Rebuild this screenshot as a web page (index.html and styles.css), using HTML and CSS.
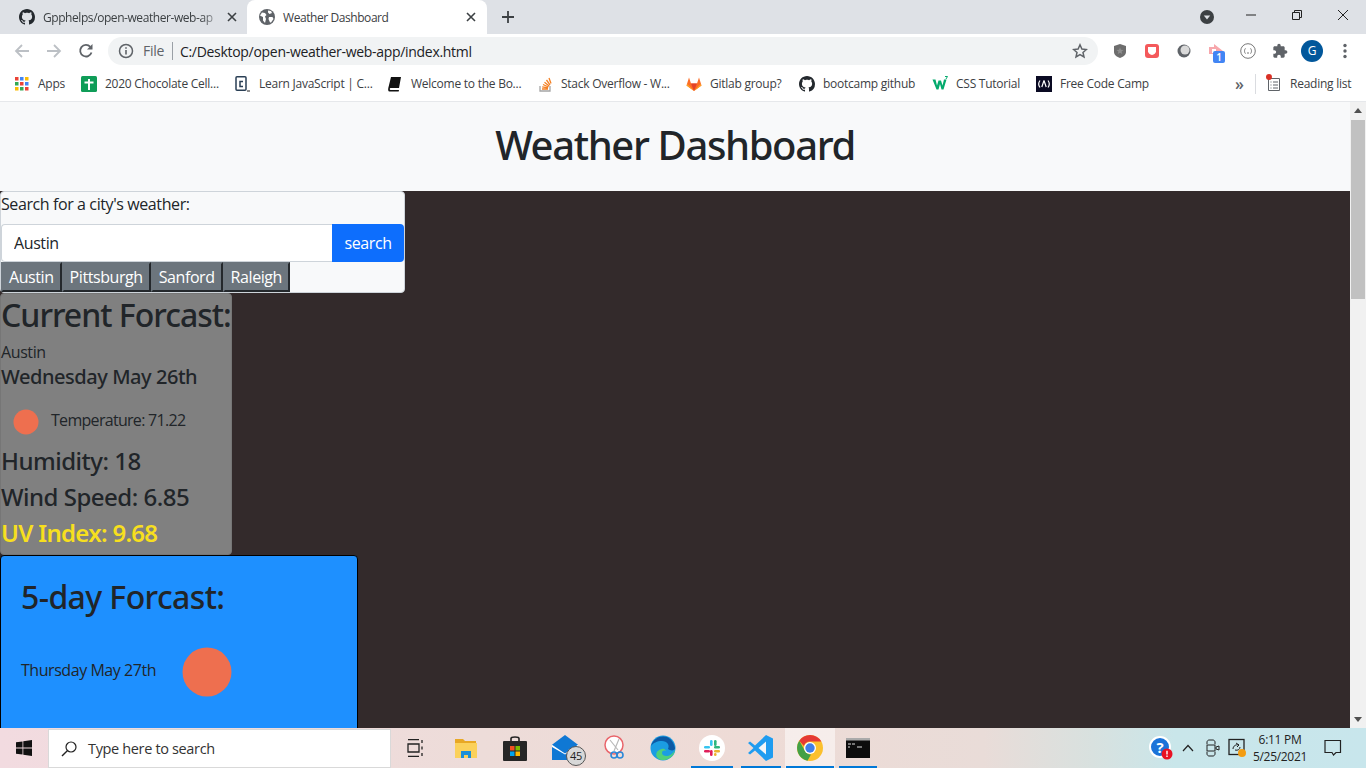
FILE: index.html
```html
<!DOCTYPE html>
<html>
<head>
  <meta charset="utf-8" />
  <title>Weather Dashboard</title>
  <link rel="stylesheet" href="styles.css">
</head>
<body>

<svg class="defs" width="0" height="0">
  <symbol id="gh" viewBox="0 0 16 16"><path d="M8 0C3.58 0 0 3.58 0 8c0 3.54 2.29 6.53 5.47 7.59.4.07.55-.17.55-.38 0-.19-.01-.82-.01-1.49-2.01.37-2.53-.49-2.69-.94-.09-.23-.48-.94-.82-1.13-.28-.15-.68-.52-.01-.53.63-.01 1.08.58 1.23.82.72 1.21 1.87.87 2.33.66.07-.52.28-.87.51-1.07-1.78-.2-3.64-.89-3.64-3.95 0-.87.31-1.59.82-2.15-.08-.2-.36-1.02.08-2.12 0 0 .67-.21 2.2.82.64-.18 1.32-.27 2-.27.68 0 1.36.09 2 .27 1.53-1.04 2.2-.82 2.2-.82.44 1.1.16 1.92.08 2.12.51.56.82 1.27.82 2.15 0 3.07-1.87 3.75-3.65 3.95.29.25.54.73.54 1.48 0 1.07-.01 1.93-.01 2.2 0 .21.15.46.55.38A8.013 8.013 0 0016 8c0-4.42-3.58-8-8-8z"/></symbol>
  <symbol id="x" viewBox="0 0 10 10"><path d="M1 1l8 8M9 1l-8 8" fill="none" stroke="currentColor" stroke-width="1.6"/></symbol>
</svg>

<!-- browser chrome -->
<div class="tabstrip">
  <div class="tab">
    <svg class="favicon" fill="#24292e"><use href="#gh"/></svg>
    <span class="tab-title fade">Gpphelps/open-weather-web-ap</span>
    <svg class="tab-close"><use href="#x"/></svg>
  </div>
  <div class="tab active">
    <svg class="favicon" viewBox="0 0 16 16"><circle cx="8" cy="8" r="8" fill="#5f6368"/><path d="M3 3.5l3 .5 1.500 2-1.500 1.500 1 2.500-1 4-2-2.500V8L1 6.500zM9 1.500l3 .5 1 2-2.500 1L9 3.500zM10 8h3.500l1 2-2.500 3.500h-1L9.500 10z" fill="#fff"/></svg>
    <span class="tab-title">Weather Dashboard</span>
    <svg class="tab-close"><use href="#x"/></svg>
  </div>
  <svg class="new-tab" viewBox="0 0 12 12"><path d="M6 0v12M0 6h12" stroke="#3c4043" stroke-width="1.800" fill="none"/></svg>
  <div class="window-btns">
    <svg class="profile-dot" viewBox="0 0 14 14"><circle cx="7" cy="7" r="7" fill="#3c4043"/><path d="M3.800 5.500h6.400L7 9.500z" fill="#dee1e6"/></svg>
    <svg class="win-btn" viewBox="0 0 46 30"><path d="M18 15h10" stroke="#222" fill="none"/></svg>
    <svg class="win-btn" viewBox="0 0 46 30"><path d="M18.500 12.500h7v7h-7zM20.500 12.500v-2h7v7h-2" stroke="#222" fill="none"/></svg>
    <svg class="win-btn" viewBox="0 0 46 30"><path d="M18 10l10 10M28 10L18 20" stroke="#222" fill="none"/></svg>
  </div>
</div>

<div class="toolbar">
  <svg class="nav-icon" viewBox="0 0 16 16"><path d="M15 8H2M8 2L2 8l6 6" fill="none" stroke="#bcc0c5" stroke-width="1.800"/></svg>
  <svg class="nav-icon" viewBox="0 0 16 16"><path d="M1 8h13M8 2l6 6-6 6" fill="none" stroke="#bcc0c5" stroke-width="1.800"/></svg>
  <svg class="nav-icon" viewBox="0 0 16 16"><path d="M13.500 9.500A5.800 5.800 0 1 1 12.300 3.800" fill="none" stroke="#5f6368" stroke-width="1.800"/><path d="M14.500 1v5.500H9z" fill="#5f6368"/></svg>
  <div class="omnibox">
    <svg class="info" viewBox="0 0 16 16"><circle cx="8" cy="8" r="6.500" fill="none" stroke="#5f6368" stroke-width="1.500"/><path d="M8 7v4.500M8 4.300v1.500" stroke="#5f6368" stroke-width="1.600"/></svg>
    <span class="scheme">File</span>
    <span class="url">C:/Desktop/open-weather-web-app/index.html</span>
    <svg class="star" viewBox="0 0 16 16"><path d="M8 1.800l1.900 4.200 4.500.5-3.400 3 1 4.500L8 11.700 4 14l1-4.500-3.400-3 4.500-.5z" fill="none" stroke="#5f6368" stroke-width="1.500"/></svg>
  </div>
  <div class="ext-icons">
    <svg class="ext" viewBox="0 0 16 16"><path d="M8 1l6 2v6c0 3-3 5-6 6-3-1-6-3-6-6V3z" fill="#6d6d6d"/><path d="M8 4.500l1 2.300 2.500.2-1.900 1.600.6 2.400L8 9.800l-2.200 1.200.6-2.400L4.500 7 7 6.800z" fill="#8e8e8e"/></svg>
    <svg class="ext" viewBox="0 0 16 16"><rect x="1" y="1" width="14" height="14" rx="3" fill="#f4595b"/><path d="M4 4h8v4.500c0 1.500-2 3-4 3.500-2-.5-4-2-4-3.500z" fill="#fff"/></svg>
    <svg class="ext" viewBox="0 0 16 16"><circle cx="8" cy="8" r="6.500" fill="#5f6368"/><circle cx="9" cy="7" r="4.500" fill="#d9d9d9"/></svg>
    <div class="ext ext-badged">
      <svg viewBox="0 0 16 16"><path d="M1 4h5V1l9 7-5 4-4-1H1z" fill="#f7a7ac"/><path d="M4 6h4v4H4z" fill="#fff"/></svg>
      <span class="ext-badge">1</span>
    </div>
    <svg class="ext" viewBox="0 0 16 16"><circle cx="8" cy="8" r="7.300" fill="none" stroke="#777"/><path d="M5.500 5.500c-1 0-.5 2-1.300 2.500.8.500.3 2.500 1.300 2.500M10.500 5.500c1 0 .5 2 1.300 2.500-.8.500-.3 2.500-1.300 2.500M7 10h2" fill="none" stroke="#777"/></svg>
    <svg class="ext" viewBox="0 0 24 24"><path d="M20.500 11H19V7c0-1.100-.9-2-2-2h-4V3.500C13 2.120 11.880 1 10.500 1S8 2.120 8 3.500V5H4c-1.100 0-1.990.9-1.990 2v3.800H3.500c1.490 0 2.700 1.210 2.700 2.700s-1.210 2.700-2.700 2.700H2V20c0 1.100.9 2 2 2h3.800v-1.500c0-1.490 1.210-2.700 2.700-2.700 1.490 0 2.700 1.210 2.700 2.700V22H17c1.100 0 2-.9 2-2v-4h1.500c1.380 0 2.500-1.120 2.500-2.500S21.880 11 20.500 11z" fill="#5f6368"/></svg>
    <div class="avatar">G</div>
    <svg class="ext dots" viewBox="0 0 4 16"><circle cx="2" cy="2.500" r="1.700" fill="#5f6368"/><circle cx="2" cy="8" r="1.700" fill="#5f6368"/><circle cx="2" cy="13.500" r="1.700" fill="#5f6368"/></svg>
  </div>
</div>

<div class="bookmarks">
  <div class="bm">
    <svg class="bm-icon" viewBox="0 0 14 14"><g><rect x="0" y="0" width="3.500" height="3.500" fill="#ea4335"/><rect x="5" y="0" width="3.500" height="3.500" fill="#4285f4"/><rect x="10" y="0" width="3.500" height="3.500" fill="#fbbc05"/><rect x="0" y="5" width="3.500" height="3.500" fill="#34a853"/><rect x="5" y="5" width="3.500" height="3.500" fill="#ea4335"/><rect x="10" y="5" width="3.500" height="3.500" fill="#4285f4"/><rect x="0" y="10" width="3.500" height="3.500" fill="#fbbc05"/><rect x="5" y="10" width="3.500" height="3.500" fill="#34a853"/><rect x="10" y="10" width="3.500" height="3.500" fill="#ea4335"/></g></svg>
    <span>Apps</span>
  </div>
  <div class="bm">
    <svg class="bm-icon" viewBox="0 0 16 16"><rect width="16" height="16" rx="1.500" fill="#0f9d58"/><path d="M8 3v11M3.500 6.500h9" stroke="#fff" stroke-width="2" fill="none"/></svg>
    <span>2020 Chocolate Cell...</span>
  </div>
  <div class="bm">
    <svg class="bm-icon" viewBox="0 0 16 16"><rect x="1" y=".8" width="10" height="13.500" rx="1" fill="#fff" stroke="#2a3f55" stroke-width="1.500"/><path d="M8 5.500H5v5h3" fill="none" stroke="#2a3f55" stroke-width="1.500"/><path d="M12 15h3" stroke="#222"/></svg>
    <span>Learn JavaScript | C...</span>
  </div>
  <div class="bm">
    <svg class="bm-icon" viewBox="0 0 16 16"><path d="M4 1h10l-2 11H3.500c-1 0-1 2 0 2H12l-.3 1.500H2.500c-1.500 0-1.500-2-1.200-3.500z" fill="#111"/></svg>
    <span>Welcome to the Bo...</span>
  </div>
  <div class="bm">
    <svg class="bm-icon" viewBox="0 0 16 16"><path d="M3 10v5h10v-5" fill="none" stroke="#a5a5a5" stroke-width="1.300"/><path d="M5 13h6M5.200 10.800l5.800 1M6 8.500l5.500 2.500M7.500 6.300l4.700 3.700M9.500 4l3.500 4.800M12 2l2 5.500" fill="none" stroke="#f48024" stroke-width="1.300"/></svg>
    <span>Stack Overflow - W...</span>
  </div>
  <div class="bm">
    <svg class="bm-icon" viewBox="0 0 16 16"><path d="M8 15L.5 9.500 3 1.500l2 6h6l2-6 2.500 8z" fill="#fc6d26"/><path d="M8 15L5 7.500h6z" fill="#e24329"/><path d="M8 15L.5 9.500l1-1.500zM8 15l7.500-5.500-1-1.500z" fill="#fca326"/></svg>
    <span>Gitlab group?</span>
  </div>
  <div class="bm">
    <svg class="bm-icon" fill="#24292e"><use href="#gh"/></svg>
    <span>bootcamp github</span>
  </div>
  <div class="bm">
    <svg class="bm-icon" viewBox="0 0 16 16"><path d="M.5 3.500h3l1.500 6 1.500-5h2.500l1.500 5 1.500-6h2.500l-3 10h-2L8 8l-1.500 5.500h-2z" fill="#04aa6d"/><path d="M13 .5h2.500L14 3" fill="none" stroke="#04aa6d"/></svg>
    <span>CSS Tutorial</span>
  </div>
  <div class="bm">
    <svg class="bm-icon" viewBox="0 0 16 16"><rect width="16" height="16" fill="#0a0a23"/><path d="M4 4.500c-1.500 2-1.500 5 0 7M12 4.500c1.500 2 1.500 5 0 7M8 4.500L5.800 11M8 4.500l2.200 6.500" fill="none" stroke="#fff" stroke-width="1.200"/></svg>
    <span>Free Code Camp</span>
  </div>
  <span class="bm-more">&raquo;</span>
  <span class="bm-divider"></span>
  <div class="bm reading">
    <div class="reading-icon">
      <svg class="bm-icon" viewBox="0 0 16 16"><path d="M2.500 2.500h11v12h-11zM4.500 6h1M7 6h5M4.500 9h1M7 9h5M4.500 12h1M7 12h5" fill="none" stroke="#5f6368"/></svg>
      <span class="red-dot"></span>
    </div>
    <span>Reading list</span>
  </div>
</div>

<!-- the page itself -->
<div class="viewport">
  <div class="page">
    <header class="jumbotron"><h1>Weather Dashboard</h1></header>

    <div class="search-card">
      <label class="search-label">Search for a city's weather:</label>
      <div class="input-group">
        <input class="search-input" type="text" value="Austin">
        <button class="search-btn">search</button>
      </div>
      <div class="history">
        <button class="history-btn">Austin</button>
        <button class="history-btn">Pittsburgh</button>
        <button class="history-btn">Sanford</button>
        <button class="history-btn">Raleigh</button>
      </div>
    </div>

    <div class="current-card">
      <h2>Current Forcast:</h2>
      <p class="city">Austin</p>
      <h5>Wednesday May 26th</h5>
      <div class="temp-row">
        <svg class="weather-icon" viewBox="0 0 50 50"><circle cx="25" cy="25" r="12.500"/></svg>
        <span class="temp-text">Temperature: 71.22</span>
      </div>
      <h4>Humidity: 18</h4>
      <h4>Wind Speed: 6.85</h4>
      <h4 class="uv">UV Index: 9.68</h4>
    </div>

    <div class="forecast-card">
      <h2>5-day Forcast:</h2>
      <div class="forecast-row">
        <span class="forecast-date">Thursday May 27th</span>
        <svg class="forecast-icon" viewBox="0 0 100 100"><circle cx="50" cy="50" r="24.500"/></svg>
      </div>
    </div>
  </div>

  <div class="scrollbar">
    <svg class="scroll-arrow" viewBox="0 0 16 17"><path d="M8 6l4 5H4z" fill="#505050"/></svg>
    <div class="scroll-track"><div class="scroll-thumb"></div></div>
    <svg class="scroll-arrow" viewBox="0 0 16 17"><path d="M8 11L4 6h8z" fill="#505050"/></svg>
  </div>
</div>

<!-- windows taskbar -->
<div class="taskbar">
  <div class="start">
    <svg viewBox="0 0 16 16" width="16" height="16"><path d="M0 2.300l6.500-.9v6.200H0zM7.300 1.300L16 0v7.600H7.300zM0 8.400h6.500v6.200L0 13.700zM7.300 8.400H16V16l-8.700-1.200z" fill="#111"/></svg>
  </div>
  <div class="task-search">
    <svg viewBox="0 0 16 16" width="16" height="16"><circle cx="10" cy="6" r="5" fill="none" stroke="#222" stroke-width="1.200"/><path d="M6.300 9.700L1 15" stroke="#222" stroke-width="1.400"/></svg>
    <span>Type here to search</span>
  </div>
  <div class="task-apps">
    <div class="app"><svg viewBox="0 0 18 18" width="18" height="18"><path d="M1 .5h11M1 17.500h11M1 5h11v8H1zM15 1v3M15 7.500v3M15 14v3" fill="none" stroke="#222" stroke-width="1.300"/></svg></div>
    <div class="app"><svg viewBox="0 0 22 22" width="22" height="22"><path d="M0 2h8l2 2h11v4H0z" fill="#e8a825"/><path d="M0 6h22v15H0z" fill="#fbd15b"/><path d="M6 14h10v7h-3v-3H9v3H6z" fill="#1b8fd8"/></svg></div>
    <div class="app"><svg viewBox="0 0 24 26" width="24" height="26"><path d="M8 7V3.500C8 1.500 16 1.500 16 3.500V7" fill="none" stroke="#222" stroke-width="1.600"/><rect y="6" width="24" height="20" rx="1" fill="#262626"/><rect x="7" y="11" width="4.500" height="4.500" fill="#f25022"/><rect x="12.500" y="11" width="4.500" height="4.500" fill="#7fba00"/><rect x="7" y="16.500" width="4.500" height="4.500" fill="#00a4ef"/><rect x="12.500" y="16.500" width="4.500" height="4.500" fill="#ffb900"/></svg></div>
    <div class="app">
      <svg viewBox="0 0 24 24" width="26" height="26"><path d="M0 9l12-9 12 9v14H0z" fill="#0f78d4"/><path d="M0 9l12 8 12-8v2l-12 7L0 11z" fill="#fff"/></svg>
      <span class="mail-count">45</span>
    </div>
    <div class="app"><svg viewBox="0 0 26 26" width="26" height="26"><circle cx="12" cy="10" r="9" fill="#fff" stroke="#e9656b" stroke-width="1.500"/><path d="M8 5l8 10M17 4L12 16" stroke="#b9b9b9" stroke-width="1.200"/><circle cx="12" cy="20" r="3" fill="none" stroke="#2b88d8" stroke-width="1.600"/><circle cx="18" cy="20" r="3" fill="none" stroke="#2b88d8" stroke-width="1.600"/></svg></div>
    <div class="app"><svg viewBox="0 0 26 26" width="26" height="26"><circle cx="13" cy="13" r="12.500" fill="#1b9de2"/><path d="M25 15c-1 7-8 10.500-13 10-5-.5-7-5-5-8 1-1.500 7-6 9-1-1-1-4-1-4 2 0 4 9 5 13-3z" fill="#4fd07a"/><path d="M1 11C3 3 11 0 17 2c4 1.500 7 6 8 11 .5 3-5 3-7 1 2-4-1-8-6-8C7 6 3 8 1 11z" fill="#0c59a4"/></svg></div>
    <div class="app running">
      <svg viewBox="0 0 26 26" width="26" height="26"><circle cx="13" cy="13" r="13" fill="#fff"/><rect x="11" y="5" width="2.600" height="6" rx="1.300" fill="#36c5f0"/><rect x="5" y="11" width="6" height="2.600" rx="1.300" fill="#36c5f0"/><rect x="15" y="5" width="2.600" height="6" rx="1.300" fill="#2eb67d"/><rect x="15" y="11" width="6" height="2.600" rx="1.300" fill="#2eb67d"/><rect x="5" y="15" width="6" height="2.600" rx="1.300" fill="#e01e5a"/><rect x="11" y="15" width="2.600" height="6" rx="1.300" fill="#e01e5a"/><rect x="15" y="15" width="6" height="2.600" rx="1.300" fill="#ecb22e"/><rect x="15" y="18" width="2.600" height="3" rx="1.300" fill="#ecb22e"/></svg>
    </div>
    <div class="app running"><svg viewBox="0 0 26 26" width="26" height="26"><path d="M18 0l7 3.500v19L18 26 7 15.500 2 19.500 0 18l5.500-5L0 8l2-1.500 5 4z" fill="#1f9cf0"/><path d="M18 6.500L10.500 13l7.500 6.500z" fill="#f3f6f8"/></svg></div>
    <div class="app running active-app"><svg viewBox="0 0 26 26" width="26" height="26"><circle cx="13" cy="13" r="13" fill="#fbc02d"/><path d="M13 0a13 13 0 0 1 11.300 6.500H13A6.500 6.500 0 0 0 6.900 11L2.300 5.800A13 13 0 0 1 13 0z" fill="#e53935"/><path d="M2.300 5.800L8 16a6.500 6.500 0 0 0 6 3.400L10.500 25.800A13 13 0 0 1 2.300 5.800z" fill="#43a047"/><circle cx="13" cy="13" r="6" fill="#fff"/><circle cx="13" cy="13" r="4.700" fill="#3f7ee8"/></svg></div>
    <div class="app running"><svg viewBox="0 0 24 20" width="24" height="20"><rect width="24" height="20" fill="#0c0c0c"/><rect width="24" height="2.500" fill="#aaa"/><path d="M2 6h3M2 9h2M6 6h3M11 9h5" stroke="#ddd" fill="none"/></svg></div>
  </div>
  <div class="tray">
    <svg class="tray-help" viewBox="0 0 24 24" width="24" height="24"><circle cx="11" cy="11" r="10" fill="#1a73d9" stroke="#fff" stroke-width="2"/><text x="11" y="17" class="help-mark">?</text><circle cx="18" cy="18" r="5.500" fill="#e81123"/><path d="M18 14.800v3.600M18 19.500v1.500" stroke="#fff" stroke-width="1.400"/></svg>
    <svg class="tray-chevron" viewBox="0 0 12 8" width="12" height="8"><path d="M1 7l5-5.500L11 7" fill="none" stroke="#222" stroke-width="1.200"/></svg>
    <svg class="tray-meet" viewBox="0 0 14 18" width="14" height="18"><path d="M1 5V3c0-1 1-2 2-2h4c1 0 2 1 2 2v2M1 13v2c0 1 1 2 2 2h4c1 0 2-1 2-2v-2" fill="none" stroke="#222"/><rect x="1" y="6" width="8" height="6" fill="none" stroke="#222"/><path d="M10 8l3-1v4l-3-1z" fill="none" stroke="#222"/></svg>
    <svg class="tray-net" viewBox="0 0 18 20" width="18" height="20"><rect x="1" y="1.500" width="15" height="15" fill="none" stroke="#222" stroke-width="1.300"/><path d="M5 11c0-3 3-5 6-4M8 5l3 2-2 2M12 9c0 2-2 4-5 3" fill="none" stroke="#222"/><circle cx="14" cy="15" r="4" fill="#f39c12"/></svg>
    <div class="clock"><span>6:11 PM</span><span>5/25/2021</span></div>
    <svg class="tray-notify" viewBox="0 0 18 18" width="18" height="18"><path d="M1 1.500h15.500v12H12L9.500 16 8 13.500H1z" fill="none" stroke="#222" stroke-width="1.200"/></svg>
  </div>
</div>

</body>
</html>
```
FILE: styles.css
```css
html, body {
  height: 100%;
  margin: 0;
  overflow: hidden;
}
body {
  display: flex;
  flex-direction: column;
  font-family: "Open Sans", "Noto Sans", sans-serif;
  color: #212529;
  background: #fff;
}
.defs {
  position: absolute;
}

/* tabs */
.tabstrip {
  height: 34px;
  flex: none;
  display: flex;
  align-items: flex-end;
  background: #dee1e6;
}
.tab {
  width: 247px;
  height: 34px;
  padding: 0 10px 0 19px;
  display: flex;
  align-items: center;
  box-sizing: border-box;
  font-size: 12px;
  letter-spacing: -0.43px;
  color: #3c4043;
}
.tab.active {
  width: 240px;
  padding: 0 11px 0 12px;
  background: #fff;
  border-radius: 8px 8px 0 0;
}
.favicon {
  width: 16px;
  height: 16px;
  flex: none;
  margin-right: 8px;
}
.tab-title {
  flex: 1;
  white-space: nowrap;
}
.fade {
  -webkit-mask-image: linear-gradient(90deg, #000 88%, transparent);
  mask-image: linear-gradient(90deg, #000 88%, transparent);
}
.tab-close {
  width: 10px;
  height: 10px;
  flex: none;
  margin-left: 4px;
}
.new-tab {
  width: 12px;
  height: 12px;
  flex: none;
  margin: 0 0 11px 15px;
}
.window-btns {
  margin-left: auto;
  display: flex;
  align-items: center;
  align-self: flex-start;
  height: 30px;
}
.profile-dot {
  width: 14px;
  height: 14px;
  margin: 4px 14px 0 0;
}
.win-btn {
  width: 46px;
  height: 30px;
}

/* toolbar */
.toolbar {
  height: 34px;
  flex: none;
  display: flex;
  align-items: center;
  padding-left: 14px;
  background: #fff;
}
.nav-icon {
  width: 16px;
  height: 16px;
  margin-right: 16px;
  flex: none;
}
.omnibox {
  width: 990px;
  height: 28px;
  margin-left: -2px;
  flex: none;
  display: flex;
  align-items: center;
  box-sizing: border-box;
  padding: 0 10px;
  background: #f1f3f4;
  border-radius: 14px;
  font-size: 14px;
  letter-spacing: -0.3px;
}
.info {
  width: 16px;
  height: 16px;
  flex: none;
}
.scheme {
  margin-left: 9px;
  padding-right: 8px;
  border-right: 1px solid #9aa0a6;
  line-height: 18px;
  color: #5f6368;
}
.url {
  margin-left: 7px;
  flex: 1;
  color: #202124;
}
.star {
  width: 16px;
  height: 16px;
  flex: none;
}
.ext-icons {
  display: flex;
  align-items: center;
  margin-left: 14px;
}
.ext {
  width: 16px;
  height: 16px;
  flex: none;
  margin-right: 16px;
  position: relative;
}
.ext-badged svg {
  display: block;
  width: 16px;
  height: 16px;
}
.ext-badge {
  position: absolute;
  left: 5px;
  top: 8px;
  width: 12px;
  height: 12px;
  background: #4285f4;
  border-radius: 2px;
  color: #fff;
  font-size: 10px;
  font-weight: 600;
  line-height: 12px;
  text-align: center;
  letter-spacing: 0;
}
.avatar {
  width: 22px;
  height: 22px;
  margin: 0 20px 0 -3px;
  border-radius: 50%;
  background: #01579b;
  color: #fff;
  font-size: 12px;
  line-height: 22px;
  text-align: center;
  flex: none;
}
.dots {
  width: 4px;
  margin: 0;
}

/* bookmarks */
.bookmarks {
  height: 34px;
  flex: none;
  display: grid;
  grid-template-columns: 66px 154px 152px 150px 149px 113px 133px 104px 199px 20px 11px auto;
  align-items: center;
  padding: 0 0 2px 15px;
  background: #fff;
  font-size: 12px;
  letter-spacing: -0.25px;
  color: #3c4043;
  white-space: nowrap;
  box-sizing: border-box;
  border-bottom: 1px solid #e6e8eb;
}
.bm {
  display: flex;
  align-items: center;
  overflow: hidden;
}
.bm-icon {
  width: 16px;
  height: 16px;
  flex: none;
  margin-right: 8px;
}
.bm:first-child .bm-icon {
  width: 14px;
  height: 14px;
  margin-right: 9px;
}
.bm-more {
  font-size: 16px;
  font-weight: 600;
  color: #5f6368;
  line-height: 16px;
}
.bm-divider {
  width: 1px;
  height: 20px;
  background: #dadce0;
}
.reading {
  overflow: visible;
}
.reading-icon {
  position: relative;
  display: flex;
}
.red-dot {
  position: absolute;
  left: 0;
  top: -2px;
  width: 6px;
  height: 6px;
  border-radius: 50%;
  background: #d93025;
}

/* page */
.viewport {
  flex: 1;
  min-height: 0;
  display: flex;
}
.page {
  flex: 1;
  min-width: 0;
  overflow: hidden;
  background: #332a2b;
}
.jumbotron {
  height: 89px;
  background: #f8f9fa;
  display: flex;
  align-items: center;
  justify-content: center;
  padding-bottom: 3px;
  box-sizing: border-box;
}
h1, h2, h4, h5 {
  font-family: "Noto Sans", "Open Sans", sans-serif;
  font-weight: 500;
}
h1 {
  margin: 0;
  font-size: 40px;
  line-height: 1.2;
  letter-spacing: -1.37px;
}
h2, h4, h5 {
  margin: 0 0 8px;
  line-height: 1.2;
}
h2 {
  font-size: 32px;
  letter-spacing: -0.6px;
  white-space: nowrap;
  margin-bottom: 6px;
  padding-top: 2px;
}
h4 {
  font-size: 24px;
  letter-spacing: -0.5px;
  margin-bottom: 7px;
}
h5 {
  font-size: 20px;
  letter-spacing: -0.45px;
  padding-top: 1px;
  margin-bottom: 7px;
}
.search-card {
  width: 405px;
  height: 102px;
  box-sizing: border-box;
  border: 1px solid #ced4da;
  border-radius: 4px;
  background: #f8f9fa;
  font-size: 16px;
  letter-spacing: -0.4px;
}
.search-label {
  display: block;
  line-height: 24px;
  margin-bottom: 8px;
}
.input-group {
  display: flex;
  height: 38px;
}
.search-input {
  flex: 1;
  min-width: 0;
  box-sizing: border-box;
  padding: 6px 12px;
  border: 1px solid #ced4da;
  border-right: 0;
  border-radius: 4px 0 0 4px;
  font: inherit;
  letter-spacing: inherit;
  color: #212529;
  background: #fff;
  outline: none;
}
.search-btn {
  width: 72px;
  border: 0;
  border-radius: 0 4px 4px 0;
  background: #0d6efd;
  color: #fff;
  font: inherit;
  letter-spacing: inherit;
}
.history {
  display: flex;
}
.history-btn {
  height: 30px;
  padding: 1px 6px;
  border: 2px solid #24282c;
  border-top-color: #6c757d;
  border-left-color: #6c757d;
  background: #6c757d;
  color: #fff;
  font: inherit;
  letter-spacing: -0.42px;
}
.current-card {
  width: 232px;
  height: 262px;
  box-sizing: border-box;
  border: 1px solid #767676;
  border-radius: 4px;
  background: #808080;
}
.current-card h2 {
  letter-spacing: -1px;
}
.city {
  margin: 0;
  font-size: 16px;
  line-height: 24px;
  letter-spacing: -0.4px;
}
.temp-row {
  display: flex;
  align-items: center;
  height: 51px;
  font-size: 16px;
  letter-spacing: -0.7px;
}
.temp-text {
  padding-bottom: 4px;
}
.weather-icon {
  width: 50px;
  height: 50px;
  flex: none;
}
.weather-icon circle, .forecast-icon circle {
  fill: #ee6f4f;
}
.uv {
  color: #f7df1e;
  font-weight: 600;
  letter-spacing: -0.7px;
}
.forecast-card {
  width: 358px;
  height: 300px;
  padding: 20px;
  box-sizing: border-box;
  border: 1px solid #000;
  border-radius: 4px;
  background: #1e90ff;
}
.forecast-row {
  display: flex;
  align-items: flex-start;
}
.forecast-date {
  width: 136px;
  margin-top: 36px;
  font-size: 16px;
  line-height: 24px;
  letter-spacing: -0.45px;
  white-space: nowrap;
}
.forecast-icon {
  width: 100px;
  height: 100px;
  flex: none;
}
.scrollbar {
  width: 16px;
  flex: none;
  display: flex;
  flex-direction: column;
  background: #f1f1f1;
}
.scroll-arrow {
  width: 16px;
  height: 17px;
  flex: none;
}
.scroll-track {
  flex: 1;
}
.scroll-thumb {
  margin: 1px 1px 0;
  height: 179px;
  background: #c1c1c1;
}

/* taskbar */
.taskbar {
  height: 40px;
  flex: none;
  display: flex;
  align-items: center;
  background: linear-gradient(90deg, #f2dbe0 0%, #eddcd9 35%, #eedbd6 55%, #e9dcd8 72%, #d8e1df 80%, #c9e6ea 86%, #c8e6ec 100%);
}
.start {
  width: 48px;
  display: flex;
  justify-content: center;
}
.task-search {
  width: 343px;
  height: 39px;
  margin-top: 1px;
  display: flex;
  align-items: center;
  box-sizing: border-box;
  padding-left: 12px;
  gap: 11px;
  background: #fff;
  border: 1px solid #d9d9d9;
  font-size: 14.500px;
  letter-spacing: -0.35px;
  color: #333;
}
.task-apps {
  display: grid;
  grid-template-columns: 50px 50px 48px 52px 48px 48px 50px 48px 50px 46px;
  height: 40px;
}
.app {
  position: relative;
  display: flex;
  align-items: center;
  justify-content: center;
  box-sizing: border-box;
}
.app.running::after {
  content: "";
  position: absolute;
  left: 4px;
  right: 4px;
  bottom: 0;
  height: 2px;
  background: #0078d7;
}
.active-app {
  background: rgba(255, 255, 255, 0.5);
}
.active-app.running::after {
  left: 1px;
  right: 1px;
}
.mail-count {
  position: absolute;
  left: 27px;
  top: 18px;
  width: 18px;
  height: 18px;
  border: 1px solid #555;
  border-radius: 50%;
  background: #d8d8d8;
  font-size: 11px;
  line-height: 18px;
  text-align: center;
  letter-spacing: -0.3px;
  color: #222;
}
.tray {
  margin-left: auto;
  display: flex;
  align-items: center;
  height: 40px;
  font-size: 12px;
  color: #222;
}
.tray-help {
  margin-right: 9px;
}
.tray-chevron {
  margin-right: 12px;
}
.tray-meet {
  margin-right: 8px;
}
.tray-net {
  margin-right: 6px;
}
.help-mark {
  font: 700 15px "Open Sans", sans-serif;
  text-anchor: middle;
  fill: #fff;
}
.clock {
  width: 56px;
  display: flex;
  flex-direction: column;
  align-items: center;
  line-height: 17px;
  letter-spacing: -0.3px;
}
.tray-notify {
  margin: 0 24px 0 16px;
}
```
